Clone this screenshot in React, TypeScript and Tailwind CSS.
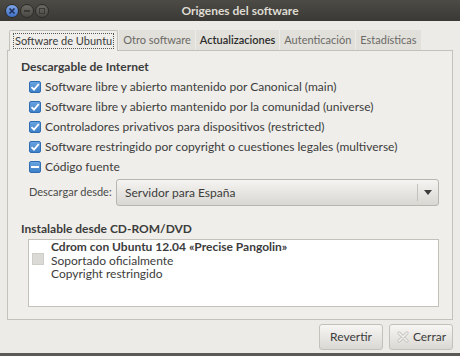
import React from "react";

const font = { fontFamily: "Lato, 'Open Sans', 'DejaVu Sans', sans-serif" };

// small blue GTK checkbox
const Check = ({ state }: { state: "on" | "mixed" }) => (
  <span className="w-[12px] h-[12px] rounded-[2px] bg-gradient-to-b from-[#6aa3e0] to-[#3d7fc7] border border-[#2f6db3] flex items-center justify-center shrink-0">
    {state === "on" ? (
      <svg width="10" height="10" viewBox="0 0 10 10">
        <path d="M1.5 5.2 L4 7.6 L8.8 2" fill="none" stroke="#fff" strokeWidth="1.8" />
      </svg>
    ) : (
      <span className="w-[8px] h-[2px] bg-white" />
    )}
  </span>
);

const WinButton = ({ kind }: { kind: "close" | "min" | "max" }) => {
  if (kind === "close")
    return (
      <span className="w-[14px] h-[14px] rounded-full bg-gradient-to-b from-[#7fa6e6] to-[#3f6fc4] flex items-center justify-center border border-[#2c2b28]">
        <svg width="8" height="8" viewBox="0 0 8 8">
          <path d="M1.5 1.5 L6.5 6.5 M6.5 1.5 L1.5 6.5" stroke="#1d2f5a" strokeWidth="1.6" />
        </svg>
      </span>
    );
  return (
    <span className="w-[14px] h-[14px] rounded-full bg-gradient-to-b from-[#6c6a63] to-[#4a4843] flex items-center justify-center border border-[#2c2b28]">
      {kind === "min" ? (
        <span className="w-[6px] h-[2px] bg-[#3a3935]" />
      ) : (
        <span className="w-[6px] h-[6px] border border-[#3a3935]" />
      )}
    </span>
  );
};

const tabs = ["Otro software", "Actualizaciones", "Autenticación", "Estadísticas"];

const sources = [
  "Software libre y abierto mantenido por Canonical (main)",
  "Software libre y abierto mantenido por la comunidad (universe)",
  "Controladores privativos para dispositivos (restricted)",
  "Software restringido por copyright o cuestiones legales (multiverse)",
];

export default function App() {
  return (
    <div className="w-[460px] h-[356px] flex flex-col bg-[#edebe7] text-[12px] text-[#3c3c3c] relative overflow-hidden whitespace-nowrap" style={font}>
      {/* title bar */}
      <div className="h-[21px] shrink-0 bg-gradient-to-b from-[#4d4b46] to-[#3a3935] flex items-center px-[5px] relative">
        <div className="flex gap-[1px]">
          <WinButton kind="close" />
          <WinButton kind="min" />
          <WinButton kind="max" />
        </div>
        <div className="absolute inset-0 flex items-center justify-center pl-[20px] font-bold text-[12px] text-[#dfdbd2]">
          Origenes del software
        </div>
      </div>

      <div className="flex-1 flex flex-col px-[7px] pt-[8px]">
        {/* tabs */}
        <div className="flex items-end h-[21px] pl-[2px] text-[11px]">
          <div className="h-[21px] px-[3px] flex items-center bg-[#efeeea] border border-b-0 border-[#c4c1ba] rounded-t-[2px] relative z-10 -mb-px mr-[1px]">
            <span className="border border-dotted border-[#555] px-[1px] leading-[14px] text-[#3c3c3c]">Software de Ubuntu</span>
          </div>
          {tabs.map((t) => (
            <div
              key={t}
              className={`h-[20px] px-[4px] flex items-center bg-[#e2e0db] mr-[1px] ${
                t === "Actualizaciones" ? "text-[#2c2c2c] font-semibold" : "text-[#6a6a66]"
              }`}
            >
              {t}
            </div>
          ))}
        </div>

        {/* notebook page */}
        <div className="h-[270px] border border-[#c4c1ba] bg-[#efeeea] px-[13px] pt-[7px] flex flex-col">
          <div className="font-bold text-[#3c3c3c]">Descargable de Internet</div>
          <div className="flex flex-col mt-[4px] pl-[8px] gap-[6px]">
            {sources.map((s) => (
              <label key={s} className="flex items-center gap-[4px] h-[14px]">
                <Check state="on" />
                <span>{s}</span>
              </label>
            ))}
            <label className="flex items-center gap-[4px] h-[14px]">
              <Check state="mixed" />
              <span>Código fuente</span>
            </label>
          </div>

          <div className="flex items-center mt-[5px] pl-[8px]">
            <span className="w-[87px] shrink-0 text-[11px] text-[#4a4a4a]">Descargar desde:</span>
            <div className="flex-1 h-[27px] rounded-[3px] border border-[#b9b6af] bg-gradient-to-b from-[#f5f4f2] to-[#d9d7d2] flex items-center pl-[8px] pr-[6px]">
              <span className="flex-1">Servidor para España</span>
              <span className="w-px h-[17px] bg-[#c4c1ba] mr-[6px]" />
              <svg width="8" height="5" viewBox="0 0 8 5">
                <path d="M0 0 H8 L4 5 Z" fill="#3c3c3c" />
              </svg>
            </div>
          </div>

          <div className="font-bold mt-[14px]">Instalable desde CD-ROM/DVD</div>
          <div className="ml-[7px] mt-[1px] h-[68px] bg-white border border-[#c4c1ba] flex items-start pl-[3px]">
            <span className="w-[12px] h-[12px] bg-[#dcdad6] border border-[#cfcdc8] mr-[7px] mt-[13px]" />
            <div className="flex flex-col leading-[13.5px]">
              <span className="font-bold">Cdrom con Ubuntu 12.04 «Precise Pangolin»</span>
              <span>Soportado oficialmente</span>
              <span>Copyright restringido</span>
            </div>
          </div>
        </div>

        {/* buttons */}
        <div className="flex justify-end gap-[6px] mt-[4px]">
          <button className="w-[64px] h-[26px] rounded-[3px] border border-[#c4c1ba] bg-gradient-to-b from-[#f7f6f4] to-[#dad8d3] text-[#3c3c3c]">
            Revertir
          </button>
          <button className="w-[64px] h-[26px] rounded-[3px] border border-[#c4c1ba] bg-gradient-to-b from-[#f7f6f4] to-[#dad8d3] text-[#3c3c3c] flex items-center justify-center gap-[3px]">
            <svg width="14" height="14" viewBox="0 0 14 14">
              <path d="M3 3 L11 11 M11 3 L3 11" stroke="#c8c6c1" strokeWidth="3.2" strokeLinecap="round" />
              <path d="M3 3 L11 11 M11 3 L3 11" stroke="#f4f3f1" strokeWidth="1.4" strokeLinecap="round" />
            </svg>
            Cerrar
          </button>
        </div>
      </div>
      <div className="h-[3px] bg-[#5a5955] shrink-0" />

      {/* mouse pointer over the tab */}
      <svg className="absolute left-[71px] top-[35px]" width="11" height="17" viewBox="0 0 11 17">
        <path d="M1 1 L1 14 L4 11 L6.5 16 L8.5 15 L6 10 L10 10 Z" fill="#111" stroke="#fff" strokeWidth="1" />
      </svg>
    </div>
  );
}
